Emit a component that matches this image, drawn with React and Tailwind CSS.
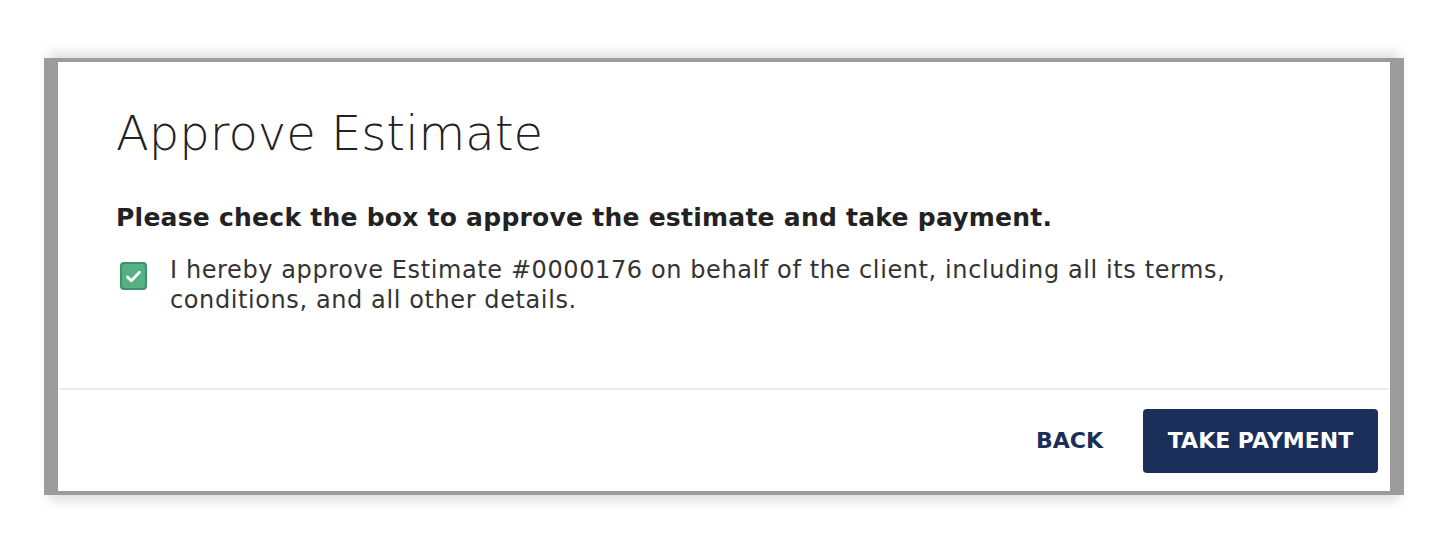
export default function App() {
  return (
    <div className="w-[1442px] h-[560px] bg-white pt-[62px] pl-[58px]" style={{ fontFamily: '"DejaVu Sans", "Open Sans", sans-serif' }}>
      <div className="w-[1332px] h-[429px] bg-white flex flex-col shadow-[0_0_0_4px_#9c9c9c,-10px_0_0_4px_#9c9c9c,10px_0_0_4px_#9c9c9c,0_0_10px_10px_rgba(0,0,0,0.12)]">
        <div className="px-[58px] pt-[42px] flex-1">
          <h1 className="text-[48px] font-light leading-[58px] text-[#222]">Approve Estimate</h1>
          <p className="mt-[40px] text-[25px] font-bold leading-[32px] text-[#222] tracking-[0.25px]">
            Please check the box to approve the estimate and take payment.
          </p>
          <label className="mt-[22px] flex items-start gap-[23px]">
            <span className="mt-[6px] ml-[4px] w-[27px] h-[28px] shrink-0 rounded-[4px] bg-[#55b184] border-2 border-[#3f9068] flex items-center justify-center">
              <svg viewBox="0 0 16 16" className="w-[19px] h-[19px]" fill="none" stroke="white" strokeWidth="2.4" strokeLinecap="round" strokeLinejoin="round">
                <path d="M3 8.5l3.2 3L13 4.5" />
              </svg>
            </span>
            <span className="text-[24px] leading-[30px] text-[#333] -mt-[1px] tracking-[0.6px]">
              I hereby approve Estimate #0000176 on behalf of the client, including all its terms,
              <br />
              conditions, and all other details.
            </span>
          </label>
        </div>
        <div className="h-[2px] bg-[#ececec]" />
        <div className="h-[101px] flex items-center justify-end gap-[40px] pr-[12px]">
          <button className="text-[22px] font-bold text-[#1b2f58]">BACK</button>
          <button className="w-[235px] h-[64px] rounded-[4px] bg-[#1a2f5a] text-white text-[22px] font-bold">
            TAKE PAYMENT
          </button>
        </div>
      </div>
    </div>
  );
}
